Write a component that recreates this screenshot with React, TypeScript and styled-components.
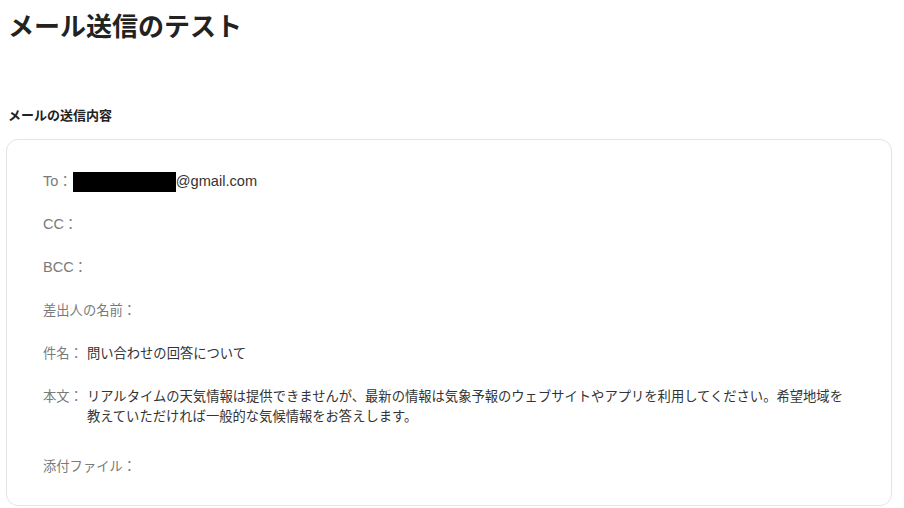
import React from "react";
import styled, { createGlobalStyle } from "styled-components";

const Global = createGlobalStyle`
  html, body { margin: 0; padding: 0; background: #ffffff; }
  body { font-family: "Liberation Sans", "Noto Sans CJK JP", sans-serif; color: #333; }
`;

const Page = styled.div`
  padding: 8px 12px 0 8px;
  width: 904px;
  box-sizing: border-box;
`;

const Title = styled.h1`
  margin: 0;
  font-family: "Noto Sans CJK JP", sans-serif;
  font-size: 26px;
  line-height: 34px;
  font-weight: 700;
  color: #222;
`;

const SectionLabel = styled.h2`
  margin: 63px 0 0 0;
  font-family: "Noto Sans CJK JP", sans-serif;
  font-size: 13px;
  line-height: 20px;
  font-weight: 700;
  color: #222;
`;

const Card = styled.div`
  margin: 14px 0 0 -2px;
  width: 886px;
  box-sizing: border-box;
  border: 1px solid #e4e4e4;
  border-radius: 12px;
  padding: 32px 36px 28px 36px;
  display: flex;
  flex-direction: column;
  gap: 23px;
`;

const Row = styled.div<{ $extra?: number }>`
  display: flex;
  align-items: flex-start;
  font-size: 13.3px;
  line-height: 20px;
  margin-bottom: ${(p) => p.$extra ?? 0}px;
`;

const Label = styled.span`
  color: #7a7a7a;
  white-space: nowrap;
  flex: none;
`;

const Latin = styled.span`
  font-size: 14.6px;
  line-height: 1;
`;

const Value = styled.span`
  color: #333;
  margin-left: 4px;
  flex: 1;
`;

const Redact = styled.span`
  display: inline-block;
  margin-left: -3px;
  width: 103px;
  height: 20px;
  background: #000;
  vertical-align: top;
`;

export default function App() {
  return (
    <Page>
      <Global />
      <Title>メール送信のテスト</Title>
      <SectionLabel>メールの送信内容</SectionLabel>
      <Card>
        <Row>
          <Label>
            <Latin>To</Latin>：
          </Label>
          <Value>
            <Redact />
            <Latin>@gmail.com</Latin>
          </Value>
        </Row>
        <Row>
          <Label>
            <Latin>CC</Latin>：
          </Label>
        </Row>
        <Row>
          <Label>
            <Latin>BCC</Latin>：
          </Label>
        </Row>
        <Row>
          <Label>差出人の名前：</Label>
        </Row>
        <Row>
          <Label>件名：</Label>
          <Value>問い合わせの回答について</Value>
        </Row>
        <Row $extra={7}>
          <Label>本文：</Label>
          <Value>
            リアルタイムの天気情報は提供できませんが、最新の情報は気象予報のウェブサイトやアプリを利用してください。希望地域を教えていただければ一般的な気候情報をお答えします。
          </Value>
        </Row>
        <Row>
          <Label>添付ファイル：</Label>
        </Row>
      </Card>
    </Page>
  );
}
